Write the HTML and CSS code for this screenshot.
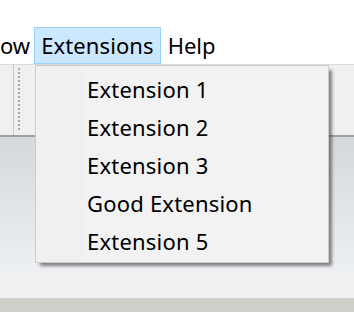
FILE: index.html
```html
<!DOCTYPE html>
<html lang="en">
<head>
    <meta charset="UTF-8">
    <title>Extensions menu</title>
    <link rel="stylesheet" href="styles.css">
</head>
<body>
    <div class="window">
        <div class="menubar">
            <div class="menu-item first">ow</div>
            <div class="menu-item open">Extensions</div>
            <div class="menu-item">Help</div>
        </div>
        <div class="toolbar">
            <div class="sep"></div>
            <div class="grip"></div>
        </div>
        <div class="workspace"></div>
        <div class="statusbar"></div>

        <div class="dropdown">
            <div class="drop-item">Extension 1</div>
            <div class="drop-item">Extension 2</div>
            <div class="drop-item">Extension 3</div>
            <div class="drop-item">Good Extension</div>
            <div class="drop-item">Extension 5</div>
        </div>
    </div>
</body>
</html>
```

FILE: styles.css
```css
html, body {margin:0; padding:0}
body {font-family:"Noto Sans", "Open Sans", sans-serif; color:#000; background:#fff}
.window {position:relative; width:354px; height:312px; overflow:hidden; display:flex; flex-direction:column}

.menubar {height:64px; background:#fff; display:flex; align-items:flex-end; border-bottom:1px solid #dadada}
.menu-item {height:37px; box-sizing:border-box; padding:0 6px; font-size:22px; line-height:35px; border:1px solid transparent}
.menu-item.first {padding-left:0; margin-left:-1px}
.menu-item.open {background:#cce8ff; border-color:#99d1ff; margin-left:-3px; letter-spacing:0.1px}

.toolbar {height:70px; background:#f0f0f0; border-bottom:2px solid #a0a0a0; position:relative}
.sep {position:absolute; left:13px; top:0; bottom:0; width:1px; background:#c8c8c8}
.grip {position:absolute; left:18px; top:3px; bottom:3px; width:2px; background:repeating-linear-gradient(to bottom, #a8a8a8 0 2px, transparent 2px 4px)}

.workspace {flex:1; background:linear-gradient(to bottom, #d3d9dc, #eef0f2 85%, #eff0f2)}
.statusbar {height:14px; background:#cfcfca}

.dropdown {position:absolute; left:35px; top:65px; width:292px; padding:4px 0 2px; background:linear-gradient(to right, #f0f0f0 47px, #f2f2f2 47px); border:1px solid #cccccc; box-shadow:4px 4px 3px -1px rgba(0,0,0,0.45)}
.drop-item {height:38px; line-height:38px; padding-left:51px; font-size:22px; letter-spacing:0.2px; white-space:nowrap}
```
